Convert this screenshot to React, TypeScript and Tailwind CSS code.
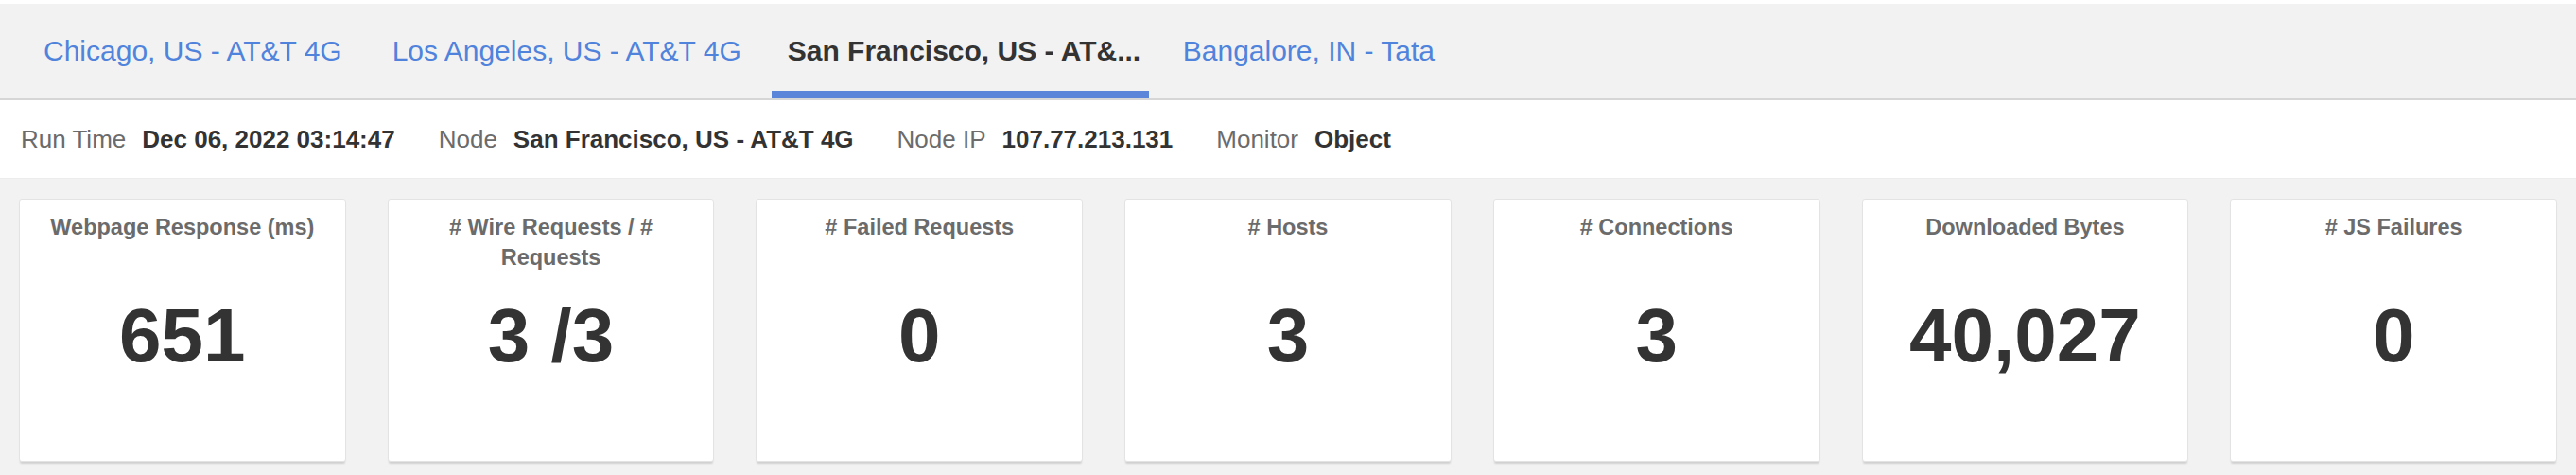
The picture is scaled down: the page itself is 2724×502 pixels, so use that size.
const tabs = [
  { label: "Chicago, US - AT&T 4G", active: false },
  { label: "Los Angeles, US - AT&T 4G", active: false },
  { label: "San Francisco, US - AT&...", active: true },
  { label: "Bangalore, IN - Tata", active: false },
];

const info = [
  { label: "Run Time", value: "Dec 06, 2022 03:14:47" },
  { label: "Node", value: "San Francisco, US - AT&T 4G" },
  { label: "Node IP", value: "107.77.213.131" },
  { label: "Monitor", value: "Object" },
];

const metrics = [
  { title: "Webpage Response (ms)", value: "651" },
  { title: "# Wire Requests / # Requests", value: "3 /3" },
  { title: "# Failed Requests", value: "0" },
  { title: "# Hosts", value: "3" },
  { title: "# Connections", value: "3" },
  { title: "Downloaded Bytes", value: "40,027" },
  { title: "# JS Failures", value: "0" },
];

function MetricCard({ title, value }: { title: string; value: string }) {
  return (
    <div className="h-[278px] rounded-[3px] border border-[#e3e3e3] bg-white px-[20px] pt-[13px] shadow-[0_3px_2px_-1px_rgba(0,0,0,0.14)]">
      <div className="h-[64px] text-center text-[23.5px] leading-[32px] font-bold text-[#6b6b6b]">{title}</div>
      <div className="mt-[27px] text-center text-[80px] leading-none font-bold text-[#333333]">{value}</div>
    </div>
  );
}

export default function App() {
  return (
    <div className="min-h-screen bg-[#f2f2f2] font-['Liberation_Sans',Arial,sans-serif]">
      <div className="h-[4px] bg-white" />

      {/* location tabs */}
      <div className="flex h-[102px] gap-[19px] border-b-2 border-[#d6d6d6] pl-[29px]">
        {tabs.map((t) => (
          <div
            key={t.label}
            className={
              t.active
                ? "-ml-[4px] flex h-[100px] w-[399px] items-center overflow-hidden border-b-[8px] border-[#5b85d9] pr-[6px] pl-[17px] pt-[7px] text-[30px] font-bold whitespace-nowrap text-[#333333]"
                : "flex h-[100px] items-center border-b-[8px] border-transparent px-[17px] pt-[7px] text-[30px] whitespace-nowrap text-[#5083dc]"
            }
          >
            {t.label}
          </div>
        ))}
      </div>

      {/* run details */}
      <div className="flex h-[83px] items-center gap-[46px] border-b border-[#ececec] bg-white pl-[22px] text-[26px]">
        {info.map((i) => (
          <div key={i.label} className="flex items-center gap-[17px] whitespace-nowrap">
            <span className="text-[#6b6b6b]">{i.label}</span>
            <span className="font-bold text-[#333333]">{i.value}</span>
          </div>
        ))}
      </div>

      <div className="grid grid-cols-7 gap-[44px] px-[20px] pt-[21px]">
        {metrics.map((m) => (
          <MetricCard key={m.title} title={m.title} value={m.value} />
        ))}
      </div>
    </div>
  );
}
